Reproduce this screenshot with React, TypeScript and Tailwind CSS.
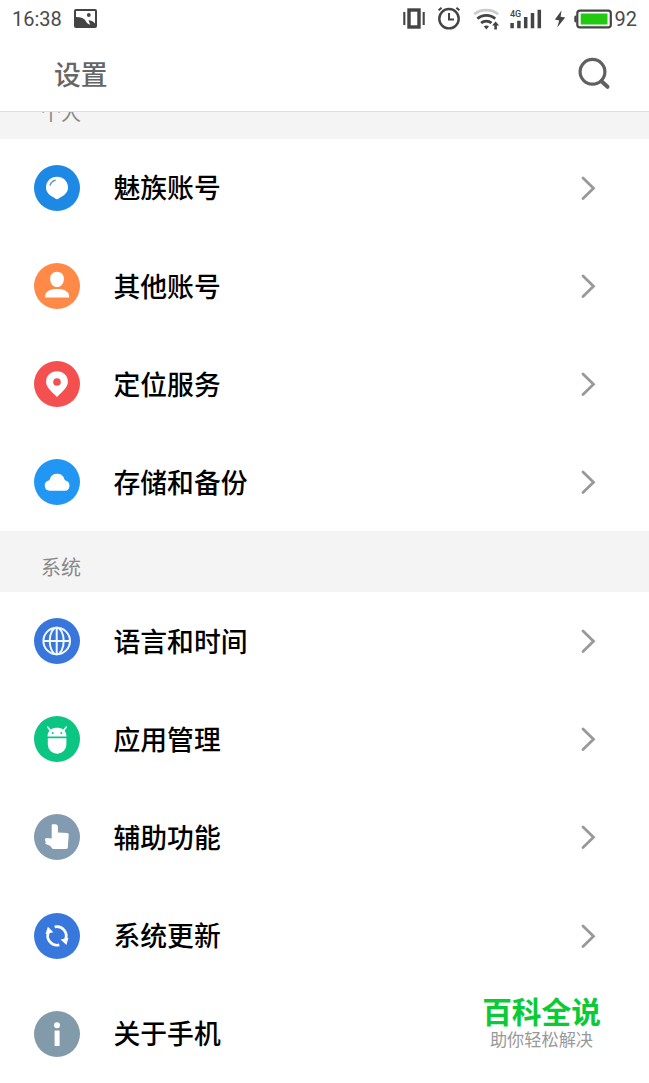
import type { ReactNode } from "react";

type Item = {
  label: string;
  color: string;
  icon: ReactNode;
  hideArrow?: boolean;
};

const personalItems: Item[] = [
  {
    label: "魅族账号",
    color: "bg-[#1e88e5]",
    icon: (
      <>
        <path
          d="M23 11.700c6.300 0 11 4.700 11 10.500 0 5-3.400 8-7 9.800-1.600.8-2.800 2.300-4 2.300s-2.400-1.500-4-2.300c-3.600-1.800-7-4.800-7-9.800 0-5.800 4.700-10.500 11-10.500Z"
          fill="#fff"
        />
        <path d="M16 20.200c.9-2.600 2.700-4.200 5.300-5" fill="none" stroke="#5b9bd0" strokeWidth="1.300" strokeLinecap="round" />
      </>
    ),
  },
  {
    label: "其他账号",
    color: "bg-[#ff8a48]",
    icon: (
      <>
        <path
          d="M23 8.700c4.200 0 6.900 3 6.900 7.200 0 4.400-3 8.100-6.900 8.100s-6.900-3.700-6.900-8.100c0-4.200 2.700-7.200 6.900-7.200Z"
          fill="#fff"
        />
        <path d="M11.200 34.500v-1.600c0-4.300 4.300-7 11.900-7s12 2.700 12 7v1.600Z" fill="#fff" />
      </>
    ),
  },
  {
    label: "定位服务",
    color: "bg-[#f4504f]",
    icon: (
      <path
        fillRule="evenodd"
        d="M23 10.300c6.300 0 10.900 4.600 10.900 10.500 0 4.800-4 8.500-10.900 15.200-6.900-6.700-10.900-10.400-10.900-15.200 0-5.900 4.600-10.500 10.900-10.500Zm0 6.900a3.800 3.800 0 1 0 0 7.600 3.800 3.800 0 0 0 0-7.600Z"
        fill="#fff"
      />
    ),
  },
  {
    label: "存储和备份",
    color: "bg-[#2196f3]",
    icon: (
      <path
        d="M15.600 31.800a5.300 5.300 0 0 1-.9-10.400c.6-.2.9-.6 1.100-1.200a7.600 7.600 0 0 1 14.600 0c.2.600.5 1 1.100 1.200a5.300 5.300 0 0 1-.7 10.400Z"
        fill="#fff"
      />
    ),
  },
];

const systemItems: Item[] = [
  {
    label: "语言和时间",
    color: "bg-[#3876dc]",
    icon: (
      <g fill="none" stroke="#f2f8ff" strokeWidth="2">
        <circle cx="22.700" cy="23" r="13.300" />
        <ellipse cx="22.700" cy="23" rx="7" ry="13.300" />
        <path d="M22.700 9.700v26.600M9.400 23H36" />
      </g>
    ),
  },
  {
    label: "应用管理",
    color: "bg-[#0bc583]",
    icon: (
      <>
        <path d="m13.800 11.200 3.200 4M32.200 11.200l-3.200 4" stroke="#fff" strokeWidth="1.600" strokeLinecap="round" />
        <path
          fillRule="evenodd"
          d="M13.500 20.400c.1-3.200 1.300-5.600 3.600-7.100 1.700-1 3.700-1.500 5.900-1.500s4.200.5 5.900 1.500c2.300 1.500 3.500 3.900 3.600 7.100Zm5.200-4.300a1 1 0 1 0 0 2 1 1 0 0 0 0-2Zm8.600 0a1 1 0 1 0 0 2 1 1 0 0 0 0-2Z"
          fill="#fff"
        />
        <path d="M13.800 22.200h18.600v6.200a9.300 9.300 0 0 1-18.600 0Z" fill="#fff" />
      </>
    ),
  },
  {
    label: "辅助功能",
    color: "bg-[#829bb0]",
    icon: (
      <path
        d="M17.700 11.300c0-.7.4-1 1-1h2.700c1.400 0 2.500 1 2.500 2.400v5.800l9.200.4c1.100.1 1.700.7 1.600 1.800l-.9 12.800c-.1.900-.6 1.400-1.500 1.400H19.600c-.8 0-1.300-.2-1.800-.8l-1.700-2.400-4.300-1.800c-.6-.3-.7-.7-.3-1.200.4-.5.4-.9 0-1.500-.5-.7-.6-1.300-.3-2.200.3-.8.8-1.100 1.600-1.100l4.900.5Z"
        fill="#fff"
      />
    ),
  },
  {
    label: "系统更新",
    color: "bg-[#3878dc]",
    icon: (
      <>
        <path
          d="M20.700 13.900a9.300 9.300 0 0 1 10.500 13.200M25.300 31.900A9.300 9.300 0 0 1 14.800 18.600"
          fill="none"
          stroke="#fff"
          strokeWidth="2.700"
        />
        <path d="m26.600 26.600 7.900-1.800-2.100 7.300ZM19.400 19.200l-7.900 1.800 2.400-7.200Z" fill="#fff" />
      </>
    ),
  },
  {
    label: "关于手机",
    color: "bg-[#829bab]",
    hideArrow: true,
    icon: (
      <>
        <circle cx="23" cy="14.300" r="3" fill="#fff" />
        <rect x="20.600" y="19.600" width="5" height="15.400" rx=".5" fill="#fff" />
      </>
    ),
  },
];

function StatusBar() {
  return (
    <div className="flex h-[38px] shrink-0 items-center pr-3 pl-3 font-[Roboto,sans-serif] text-xl leading-none text-[#4a4a4a]">
      <span className="w-[62px]">16:38</span>
      <svg className="-mt-px" width="23" height="19" viewBox="0 0 23 19">
        <rect width="23" height="19" rx="2" fill="#444" />
        <path d="M2 2h19v12.500c-1.900-2.300-4-3.300-6.500-3.300l1.700 4.600c-2.600-1-3.600-2.300-4.300-3.600C10.300 9.300 7 8.300 2 8.100Z" fill="#fff" />
        <circle cx="14.800" cy="6" r="1.900" fill="#444" />
      </svg>

      <div className="ml-auto flex items-center">
        {/* Vibrate */}
        <svg width="22" height="21" viewBox="0 0 22 21" className="-mt-px mr-[12px]">
          <rect x="6" y="2" width="10" height="17" fill="none" stroke="#444" strokeWidth="3.400" />
          <path d="M1.300 4v13M20.700 4v13" stroke="#444" strokeWidth="2.100" />
        </svg>
        {/* Alarm */}
        <svg width="24" height="24" viewBox="0 0 24 24" fill="none" stroke="#444" className="-mt-[2px] mr-[12px]">
          <circle cx="12" cy="12.700" r="9.700" strokeWidth="2.400" />
          <path d="M12 7v6.500h5M1.600 4.300l3-2.600M22.400 4.300l-3-2.600" strokeWidth="2" />
        </svg>
        {/* Wifi */}
        <svg width="28" height="24" viewBox="0 0 28 24" fill="none" strokeWidth="2.700" className="-mt-px mr-[9px]">
          <path d="M1.200 7.200c6.300-5.500 17.700-5.500 24 0" stroke="#ccc" />
          <path d="M4.400 11.800c4.900-4.500 13-4.500 17.800 0M8.100 16.100c3-2.700 7.400-2.700 10.400 0" stroke="#444" />
          <path d="M10.700 19.300c1.600-1.100 3.700-1.100 5.300 0L13.400 22.600Z" fill="#444" />
          <path d="m19 18.600 3.600-4.200 3.600 4.200h-2.300v4h-2.600v-4Z" fill="#444" />
        </svg>
        {/* Mobile signal */}
        <svg width="32" height="22" viewBox="0 0 32 22" className="-mt-px mr-[12px]">
          <text x="0" y="8.500" fontSize="9" fontWeight="500" fontFamily="Roboto, sans-serif" fill="#444">
            4G
          </text>
          <path
            d="M2.100 15v5.300M8.900 12.800v7.500M15.700 9v11.300M22.500 5v15.300M29.300 1.800v18.500"
            stroke="#444"
            strokeWidth="3.500"
          />
        </svg>
        {/* Charging bolt */}
        <svg width="13" height="18" viewBox="0 0 13 18" className="mr-[7px]">
          <path d="M7.500.5.900 9.600l4.300 1L3.200 17.500 11.200 7.500 6.600 6.700Z" fill="#444" />
        </svg>
        {/* Battery */}
        <svg width="38" height="20" viewBox="0 0 38 20" className="-mt-px mr-[3px]">
          <path d="M2.500 6.500v7H1.800A1.500 1.500 0 0 1 .3 11.800V8.200A1.500 1.500 0 0 1 1.800 6.500Z" fill="#444" />
          <rect x="3.300" y="1.600" width="33.500" height="16.800" rx="2.600" fill="none" stroke="#444" strokeWidth="2.200" />
          <rect x="6.700" y="4.500" width="26.800" height="11" fill="#21c910" />
        </svg>
        <span>92</span>
      </div>
    </div>
  );
}

function Row({ label, color, icon, hideArrow }: Item) {
  return (
    <li className="flex h-[98.180px] items-center pr-[53px] pl-[33.500px]">
      <span className={`size-[46px] shrink-0 rounded-full ${color}`}>
        <svg width="46" height="46" viewBox="0 0 46 46">
          {icon}
        </svg>
      </span>
      <span className="ml-[34px] text-[26.800px] leading-none font-medium text-black">{label}</span>
      {!hideArrow && (
        <svg className="ml-auto" width="16" height="26" viewBox="0 0 16 26" fill="none">
          <path d="m3 3 10.500 10.300L3 23.600" stroke="#999" strokeWidth="2.800" strokeLinecap="round" />
        </svg>
      )}
    </li>
  );
}

export default function App() {
  return (
    <div className="relative flex h-[1083px] w-[649px] flex-col overflow-hidden bg-white font-['Noto_Sans_CJK_SC',sans-serif]">
      <StatusBar />

      <header className="flex h-[74px] shrink-0 items-center justify-between border-b border-[#dedede] pr-[38px] pb-px pl-[54px]">
        <h1 className="text-[26.800px] leading-none font-medium text-[#666]">设置</h1>
        <svg width="34" height="34" viewBox="0 0 34 34" fill="none" stroke="#606060" className="-mt-[3px]">
          <circle cx="15.500" cy="15.800" r="12.400" strokeWidth="3.200" />
          <path d="m24.500 25.200 6 5.600" strokeWidth="4" strokeLinecap="round" />
        </svg>
      </header>

      {/* First group title is scrolled partly under the header */}
      <div className="flex h-[26.700px] shrink-0 items-end overflow-hidden bg-[#f4f4f4] pb-[16px] pl-[41px]">
        <h2 className="text-xl leading-none text-[#888]">个人</h2>
      </div>
      <ul>
        {personalItems.map((item) => (
          <Row key={item.label} {...item} />
        ))}
      </ul>

      <div className="flex h-[60.700px] shrink-0 items-end bg-[#f4f4f4] pb-[15px] pl-[41px]">
        <h2 className="text-xl leading-none text-[#888]">系统</h2>
      </div>
      <ul>
        {systemItems.map((item) => (
          <Row key={item.label} {...item} />
        ))}
      </ul>

      {/* Watermark */}
      <div className="absolute top-[995px] left-[482px] flex w-[119px] flex-col items-center whitespace-nowrap">
        <span className="text-[29.700px] leading-[31px] font-bold text-[#0acb35]">百科全说</span>
        <span className="mt-[4px] text-[17.200px] leading-[18px] text-[#999]">助你轻松解决</span>
      </div>
    </div>
  );
}
